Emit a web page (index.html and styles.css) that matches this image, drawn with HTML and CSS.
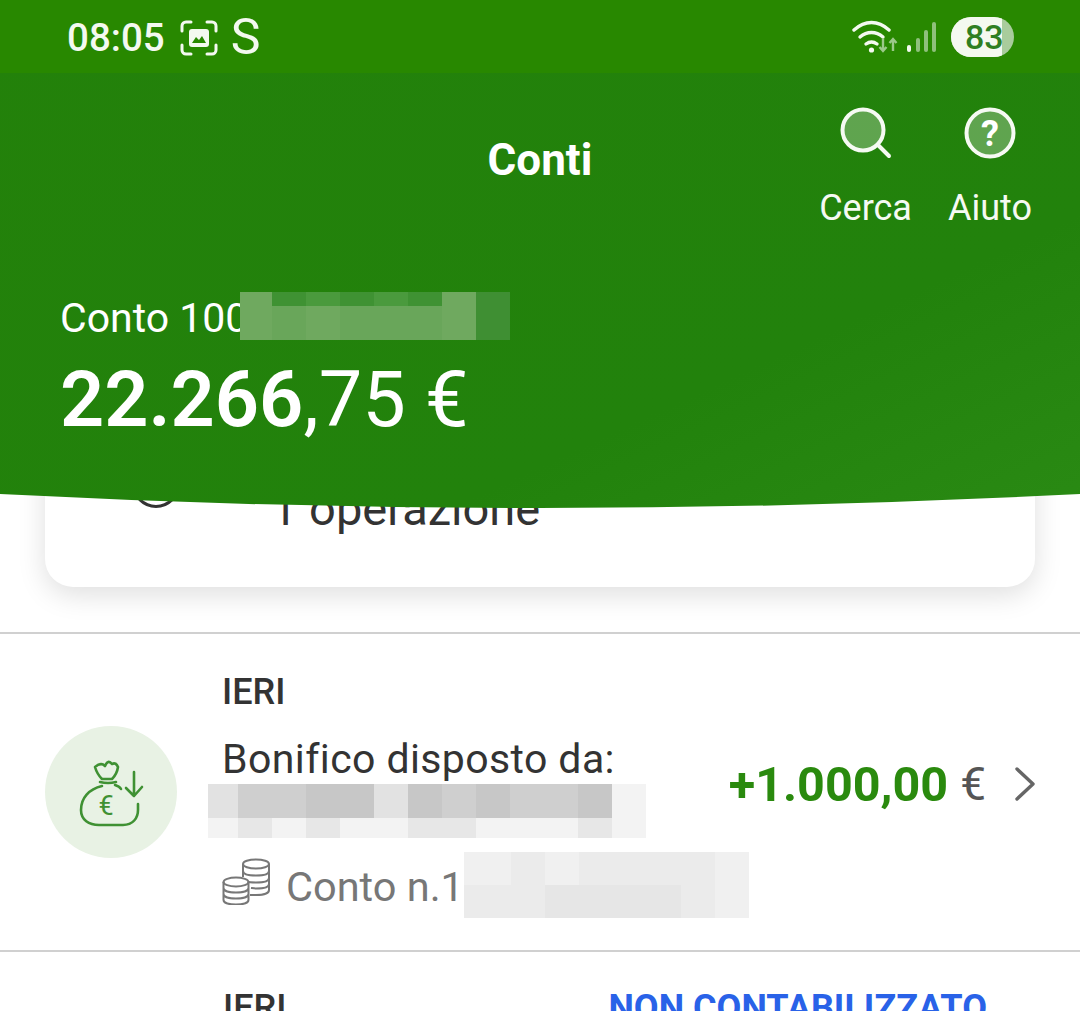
FILE: index.html
```html
<!DOCTYPE html>
<html lang="it">
<head>
  <meta charset="UTF-8">
  <meta name="viewport" content="width=device-width, initial-scale=1.0">
  <title>Conti</title>
  <link rel="stylesheet" href="styles.css">
</head>
<body>
  <header class="top">
    <!-- Status bar -->
    <div class="status">
      <div class="status-left">
        <span class="time">08:05</span>
        <svg class="shot-icon" width="38" height="36" viewBox="0 0 38 36">
          <path d="M2 11V6a4 4 0 0 1 4-4h5M27 2h5a4 4 0 0 1 4 4v5M36 25v5a4 4 0 0 1-4 4h-5M11 34H6a4 4 0 0 1-4-4v-5" fill="none" stroke="#f4f9f0" stroke-width="3" stroke-linecap="round"/>
          <rect x="9" y="9" width="20" height="18" rx="3" fill="#f4f9f0"/>
          <path d="M12 23l4-6 3 3 3-4 4 7z" fill="#288800"/>
        </svg>
        <span class="s-letter">S</span>
      </div>
      <div class="status-right">
        <svg class="wifi-icon" width="46" height="36" viewBox="0 0 46 36">
          <g fill="none" stroke="#f4f9f0" stroke-width="3.4" stroke-linecap="round">
            <path d="M2 11C13 1 26 1 37 11"/>
            <path d="M8 18c7-6 16-6 23 0"/>
            <path d="M14 25c4-3 7-3 11 0"/>
          </g>
          <circle cx="19.500" cy="31" r="2.600" fill="#f4f9f0"/>
          <path d="M31 19v13m-3.500-4l3.500 4 3.500-4" fill="none" stroke="#9cc98a" stroke-width="2.400"/>
          <path d="M41 32V20m-3.500 4l3.500-4 3.500 4" fill="none" stroke="#9cc98a" stroke-width="2.400"/>
        </svg>
        <svg width="30" height="32" viewBox="0 0 30 32">
          <rect x="0" y="24" width="4" height="7" rx="2" fill="#f4f9f0"/>
          <rect x="9" y="17" width="4" height="14" rx="2" fill="#8fc07c"/>
          <rect x="17" y="9" width="4" height="22" rx="2" fill="#8fc07c"/>
          <rect x="25" y="1" width="4" height="30" rx="2" fill="#8fc07c"/>
        </svg>
        <div class="battery"><span class="battery-fill">83</span></div>
      </div>
    </div>

    <!-- Title and actions -->
    <div class="toolbar">
      <h1 class="title">Conti</h1>
      <div class="actions">
        <div class="action">
          <svg width="56" height="60" viewBox="0 0 56 60">
            <circle cx="25" cy="27" r="20.500" fill="rgba(255,255,255,0.28)" stroke="#f6faf3" stroke-width="4"/>
            <path d="M40 42l11 11" stroke="#f6faf3" stroke-width="4" stroke-linecap="round"/>
          </svg>
          <span>Cerca</span>
        </div>
        <div class="action">
          <svg width="56" height="60" viewBox="0 0 56 60">
            <circle cx="28" cy="30" r="23.500" fill="rgba(255,255,255,0.28)" stroke="#f6faf3" stroke-width="4"/>
            <text x="28" y="43" text-anchor="middle" class="help-mark">?</text>
          </svg>
          <span>Aiuto</span>
        </div>
      </div>
    </div>

    <!-- Balance -->
    <div class="account">
      <div class="account-name">
        <span>Conto 100</span>
        <div class="pixels pixels-head">
          <i class="g4"></i><i class="g2"></i><i class="g1"></i><i class="g2"></i><i class="g1"></i><i class="g2"></i><i class="g4"></i><i class="g3"></i>
          <i class="g4"></i><i class="g5"></i><i class="g4"></i><i class="g5"></i><i class="g5"></i><i class="g5"></i><i class="g4"></i><i class="g3"></i>
        </div>
      </div>
      <div class="balance">22.266<span class="balance-light">,75 €</span></div>
    </div>
  </header>

  <!-- Card scrolled under the header -->
  <section class="card">
    <span class="card-ring"></span>
    <span class="card-text">1 operazione</span>
  </section>

  <!-- Movements -->
  <div class="row row-first">
    <div class="row-icon">
      <svg width="132" height="132" viewBox="0 0 132 132">
        <g fill="none" stroke="#3f9133" stroke-width="2.600" stroke-linecap="round" stroke-linejoin="round">
          <path d="M50 41Q56 36 60 40Q63 33 67 38Q71 36 73 41Q72 48 67 53H57Q52 48 50 41Z"/>
          <path d="M55 56Q63 58 71 56"/>
          <path d="M57 60C44 63 36 72 36 84C36 94 44 99 54 99H78C88 99 93 92 93 84V78"/>
          <path d="M70 59C73 60 75 61 76 63"/>
          <path d="M89 46V70M81 62l8 8 8-9"/>
        </g>
        <text x="61" y="89" text-anchor="middle" class="bag-euro">€</text>
      </svg>
    </div>
    <div class="row-main">
      <div class="row-date">IERI</div>
      <div class="row-title">Bonifico disposto da:</div>
      <div class="pixels pixels-name">
        <i class="p3"></i><i class="p5"></i><i class="p5"></i><i class="p6"></i><i class="p6"></i><i class="p3"></i><i class="p6"></i><i class="p5"></i><i class="p6"></i><i class="p5"></i><i class="p5"></i><i class="p6"></i><i class="p1"></i>
        <i class="p1"></i><i class="p2"></i><i class="p1"></i><i class="p2"></i><i class="p1"></i><i class="p1"></i><i class="p2"></i><i class="p2"></i><i class="p1"></i><i class="p1"></i><i class="p1"></i><i class="p2"></i><i class="p1"></i>
      </div>
      <div class="row-account">
        <svg width="48" height="48" viewBox="0 0 48 48">
          <g fill="none" stroke="#777" stroke-width="2">
            <ellipse cx="34" cy="7" rx="13" ry="4.500"/>
            <path d="M21 7V20M47 7V33c0 3-5 5-13 5h-6M21 14c0 3 6 4.500 13 4.500s13-1.500 13-4.500M21 21c0 3 6 4.500 13 4.500s13-1.500 13-4.500M29 31c2 .3 3 .5 5 .5 7 0 13-1.500 13-4.500"/>
            <ellipse cx="14" cy="25" rx="12.500" ry="4.500" fill="#fff"/>
            <path d="M1.500 25V43c0 3 6 4.500 12.500 4.500s12.500-1.500 12.500-4.500V25M1.500 31c0 3 6 4.500 12.500 4.500s12.500-1.500 12.500-4.500M1.500 37c0 3 6 4.500 12.500 4.500s12.500-1.500 12.500-4.500"/>
          </g>
        </svg>
        <span>Conto n.1</span>
        <div class="pixels pixels-account">
          <i class="q1"></i><i class="q2"></i><i class="q1"></i><i class="q2"></i><i class="q2"></i><i class="q2"></i><i class="q2"></i><i class="q1"></i>
          <i class="q2"></i><i class="q2"></i><i class="q3"></i><i class="q3"></i><i class="q3"></i><i class="q3"></i><i class="q2"></i><i class="q1"></i>
        </div>
      </div>
    </div>
    <div class="row-amount">
      <span class="amount">+1.000,00</span>
      <span class="currency">€</span>
      <svg width="22" height="36" viewBox="0 0 22 36">
        <path d="M2 3l16 15L2 33" fill="none" stroke="#666" stroke-width="3.400" stroke-linecap="round" stroke-linejoin="round"/>
      </svg>
    </div>
  </div>

  <div class="row row-next">
    <div class="row-date">IERI</div>
    <div class="row-status">NON CONTABILIZZATO</div>
  </div>
</body>
</html>
```

FILE: styles.css
```css
/* Basic Styles */
html, body {
  margin: 0;
  padding: 0;
  height: 1011px;
  overflow: hidden;
}

body {
  font-family: Roboto, "Liberation Sans", sans-serif;
  background-color: #fff;
  color: #333;
}

/* Green header */
.top {
  position: relative;
  z-index: 2;
  height: 522px;
  color: #fff;
  background: linear-gradient(155deg, #23810a 0%, #22820c 70%, #2a8a14 100%);
  clip-path: path("M0 0H1080V494Q540 522 0 494Z");
}

.status {
  height: 73px;
  background-color: #288800;
  display: flex;
  justify-content: space-between;
  align-items: center;
  padding: 0 66px 0 67px;
}

.status-left, .status-right {
  display: flex;
  align-items: center;
}

.time {
  padding-top: 2px;
  font-size: 38.5px;
  font-weight: 500;
  color: #f4f9f0;
}

.shot-icon {
  margin: 2px 0 0 15px;
}

.s-letter {
  margin-left: 13px;
  font-size: 50px;
  line-height: 60px;
  color: #f4f9f0;
}

.status-right {
  gap: 9px;
}

.wifi-icon {
  margin-left: 3px;
}

.battery {
  width: 63px;
  height: 40px;
  margin-left: 5px;
  border-radius: 20px;
  overflow: hidden;
  background-color: #a9cc9c;
}

.battery-fill {
  display: block;
  width: 51px;
  height: 40px;
  padding-left: 14px;
  box-sizing: border-box;
  background-color: #f4f9f0;
  color: #2f7f22;
  font-size: 34px;
  font-weight: 500;
  line-height: 40px;
  white-space: nowrap;
}

.toolbar {
  position: relative;
  display: flex;
  justify-content: flex-end;
  padding: 30px 48px 0 0;
}

.title {
  position: absolute;
  left: 0;
  right: 0;
  top: 61px;
  margin: 0;
  text-align: center;
  font-size: 44px;
  line-height: 52px;
  font-weight: 700;
}

.actions {
  display: flex;
  gap: 36px;
}

.action {
  display: flex;
  flex-direction: column;
  align-items: center;
  gap: 25px;
  font-size: 36px;
  line-height: 40px;
  color: #f6faf3;
}

.help-mark {
  font-size: 36px;
  font-weight: 700;
  fill: #fff;
}

.account {
  padding: 65px 0 0 60px;
}

.account-name {
  display: flex;
  font-size: 41px;
  line-height: 50px;
}

.balance {
  margin-top: 12px;
  font-size: 77.5px;
  line-height: 90px;
  font-weight: 600;
}

.balance-light {
  font-weight: 400;
}

/* Pixelated parts */
.pixels {
  display: grid;
  flex-shrink: 0;
}

.pixels i {
  display: block;
}

.pixels-head {
  width: 270px;
  height: 48px;
  margin: -1px 0 0 -8px;
  grid-template-columns: 32px 34px 34px 34px 34px 34px 34px 34px;
  grid-template-rows: 14px 34px;
}

.g1 { background-color: #4a9a3d; }
.g2 { background-color: #3f9233; }
.g3 { background-color: #3f8f33; }
.g4 { background-color: #6fa95f; }
.g5 { background-color: #69a65a; }

.pixels-name {
  width: 438px;
  height: 54px;
  margin: 1px 0 0 -14px;
  grid-template-columns: 30px repeat(12, 34px);
  grid-template-rows: 34px 20px;
}

.p1 { background-color: #f3f3f3; }
.p2 { background-color: #e7e7e7; }
.p3 { background-color: #e2e2e2; }
.p5 { background-color: #cfcfcf; }
.p6 { background-color: #c7c7c7; }

.pixels-account {
  width: 285px;
  height: 66px;
  margin-left: 0;
  grid-template-columns: 47px 34px 34px 34px 34px 34px 34px 34px;
  grid-template-rows: 33px 33px;
}

.q1 { background-color: #f0f0f0; }
.q2 { background-color: #ebebeb; }
.q3 { background-color: #e6e6e6; }

/* Card under the header */
.card {
  position: relative;
  height: 147px;
  margin: -82px 45px 0;
  background-color: #fff;
  border-radius: 0 0 28px 28px;
  box-shadow: 0 8px 28px rgba(0, 0, 0, 0.13);
}

.card-ring {
  position: absolute;
  left: 87px;
  top: 20px;
  width: 42px;
  height: 42px;
  border: 3px solid #333;
  border-radius: 50%;
}

.card-text {
  position: absolute;
  left: 226px;
  top: 44px;
  font-size: 47px;
  line-height: 50px;
  color: #333;
}

/* Movements */
.row {
  border-top: 2px solid #d0d0d0;
}

.row-first {
  display: flex;
  height: 316px;
  margin-top: 45px;
  padding-left: 45px;
  position: relative;
}

.row-icon {
  width: 132px;
  height: 132px;
  margin-top: 92px;
  border-radius: 50%;
  background-color: #e8f2e4;
}

.bag-euro {
  font-size: 27px;
  fill: #3f9133;
}

.row-main {
  margin-left: 45px;
  padding-top: 36px;
}

.row-date {
  font-size: 36px;
  line-height: 44px;
  font-weight: 500;
  color: #333;
}

.row-title {
  margin-top: 21px;
  font-size: 41px;
  line-height: 48px;
  letter-spacing: 0.4px;
}

.row-account {
  display: flex;
  align-items: center;
  margin-top: 12px;
  font-size: 41.5px;
  line-height: 66px;
  color: #777;
}

.row-account svg {
  margin: 0 16px 8px 0;
}

.row-account span {
  margin-top: 4px;
}

.row-amount {
  position: absolute;
  right: 43px;
  top: 125px;
  display: flex;
  align-items: center;
  height: 50px;
}

.amount {
  font-size: 48.5px;
  font-weight: 700;
  color: #2a8a0e;
}

.currency {
  margin: 0 29px 0 12px;
  font-size: 46px;
  color: #555;
}

.row-next {
  display: flex;
  justify-content: space-between;
  padding: 34px 93px 0 223px;
}

.row-status {
  font-size: 36px;
  line-height: 44px;
  font-weight: 700;
  color: #2962e8;
}
```
